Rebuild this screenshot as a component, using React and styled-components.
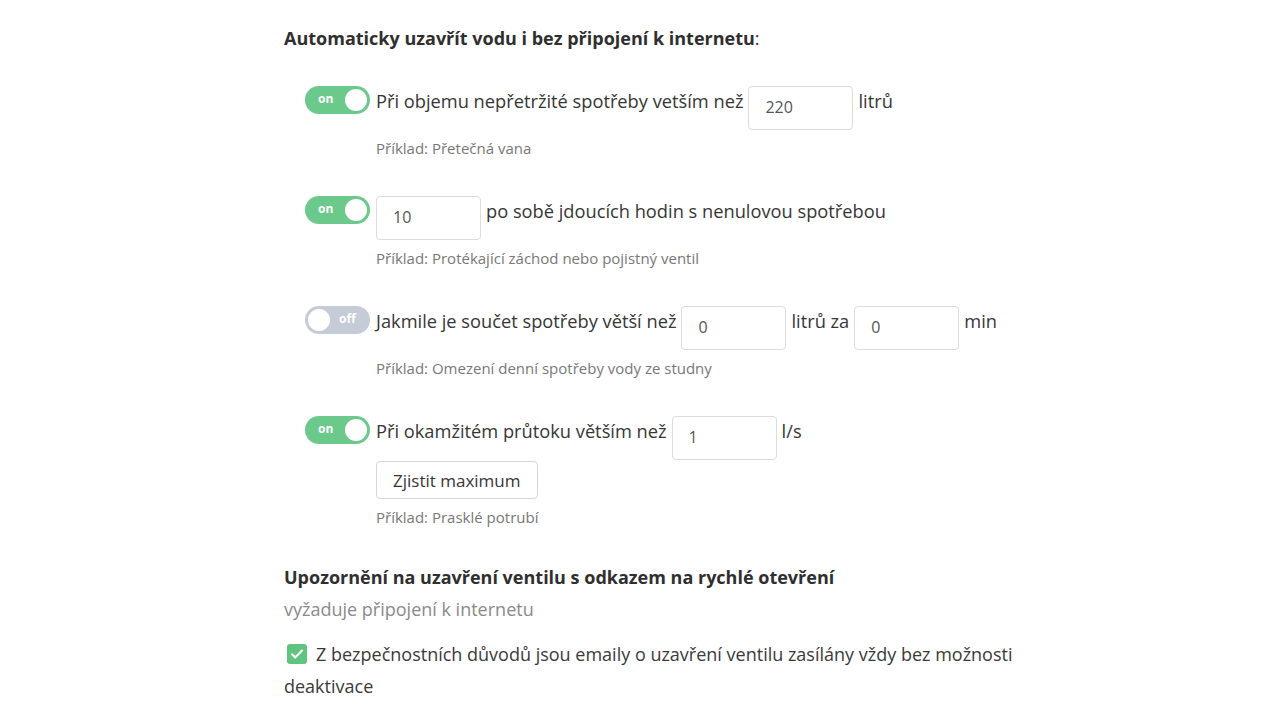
import React from 'react';
import styled, { createGlobalStyle } from 'styled-components';

const GlobalStyle = createGlobalStyle`
  body {
    margin: 0;
    background: #fff;
    font-family: "Open Sans", Lato, sans-serif;
    color: #363636;
  }
`;

const Page = styled.div`
  width: 790px;
  padding: 24px 0 0 284px;
`;

const Heading = styled.div`
  font-size: 18px;
  font-weight: 700;
  line-height: 28px;
  color: #2f2f2f;
  margin-top: ${({ gap }) => gap || 0}px;

  span {
    font-weight: 400;
  }
`;

const Rules = styled.div`
  display: flex;
  flex-direction: column;
  gap: 38px;
  margin: 34px 0 0 21px;
`;

const Row = styled.div`
  display: flex;
  align-items: flex-start;
  gap: 6px;
`;

const Track = styled.div`
  position: relative;
  flex: none;
  width: 65px;
  height: 28px;
  border-radius: 14px;
  background: ${({ on }) => (on ? '#6cc98c' : '#c5ccd7')};
  color: #fff;
  font-size: 12px;
  font-weight: 700;
  line-height: 26px;
  box-sizing: border-box;
  padding: ${({ on }) => (on ? '0 0 0 13px' : '0 0 0 34px')};
`;

const Knob = styled.div`
  position: absolute;
  top: 3px;
  left: ${({ on }) => (on ? '40px' : '3px')};
  width: 22px;
  height: 22px;
  border-radius: 50%;
  background: #fff;
`;

const Body = styled.div`
  display: flex;
  flex-direction: column;
  align-items: flex-start;
`;

const Line = styled.div`
  display: flex;
  align-items: flex-start;
  gap: 5px;
  font-size: 18.25px;
  line-height: 30px;
`;

const Field = styled.input`
  width: 105px;
  height: 44px;
  box-sizing: border-box;
  border: 1px solid #dcdcdc;
  border-radius: 4px;
  padding: 0 16px 3px;
  font: inherit;
  font-size: 16px;
  color: #555;
  outline: none;
`;

const Button = styled.button`
  height: 38px;
  padding: 0 16px;
  margin-top: 1px;
  border: 1px solid #d6d6d6;
  border-radius: 4px;
  background: #fff;
  font: inherit;
  font-size: 17px;
  color: #363636;
`;

const Example = styled.div`
  margin-top: 8px;
  font-size: 15px;
  line-height: 20px;
  color: #787878;
`;

const Sub = styled.div`
  font-size: 18px;
  line-height: 28px;
  color: #8a8a8a;
  margin-top: 4px;
`;

const Note = styled.div`
  margin-top: 15px;
  font-size: 18px;
  line-height: 32px;
  color: #3a3a3a;

  svg {
    vertical-align: -3px;
    margin: 0 9px 0 3px;
  }
`;

const Toggle = ({ on }) => (
  <Track on={on ? 1 : 0}>
    {on ? 'on' : 'off'}
    <Knob on={on ? 1 : 0} />
  </Track>
);

const Check = () => (
  <svg width="20" height="20" viewBox="0 0 20 20">
    <rect x="0" y="0" width="20" height="20" rx="3" fill="#5fc47d" />
    <path d="M5 10.3l3.2 3.2L15 6.6" fill="none" stroke="#fff" strokeWidth="2.2" strokeLinecap="round" strokeLinejoin="round" />
  </svg>
);

export default function App() {
  return (
    <Page>
      <GlobalStyle />
      <Heading>
        Automaticky uzavřít vodu i bez připojení k internetu<span>:</span>
      </Heading>
      <Rules>
        <Row>
          <Toggle on />
          <Body>
            <Line>
              <span>Při objemu nepřetržité spotřeby vetším než</span>
              <Field defaultValue="220" />
              <span>litrů</span>
            </Line>
            <Example>Příklad: Přetečná vana</Example>
          </Body>
        </Row>
        <Row>
          <Toggle on />
          <Body>
            <Line>
              <Field defaultValue="10" />
              <span>po sobě jdoucích hodin s nenulovou spotřebou</span>
            </Line>
            <Example>Příklad: Protékající záchod nebo pojistný ventil</Example>
          </Body>
        </Row>
        <Row>
          <Toggle />
          <Body>
            <Line>
              <span>Jakmile je součet spotřeby větší než</span>
              <Field defaultValue="0" />
              <span>litrů za</span>
              <Field defaultValue="0" />
              <span>min</span>
            </Line>
            <Example>Příklad: Omezení denní spotřeby vody ze studny</Example>
          </Body>
        </Row>
        <Row>
          <Toggle on />
          <Body>
            <Line>
              <span>Při okamžitém průtoku větším než</span>
              <Field defaultValue="1" />
              <span>l/s</span>
            </Line>
            <Button>Zjistit maximum</Button>
            <Example>Příklad: Prasklé potrubí</Example>
          </Body>
        </Row>
      </Rules>
      <Heading gap={36}>Upozornění na uzavření ventilu s odkazem na rychlé otevření</Heading>
      <Sub>vyžaduje připojení k internetu</Sub>
      <Note>
        <Check />
        Z bezpečnostních důvodů jsou emaily o uzavření ventilu zasílány vždy bez možnosti deaktivace
      </Note>
    </Page>
  );
}
